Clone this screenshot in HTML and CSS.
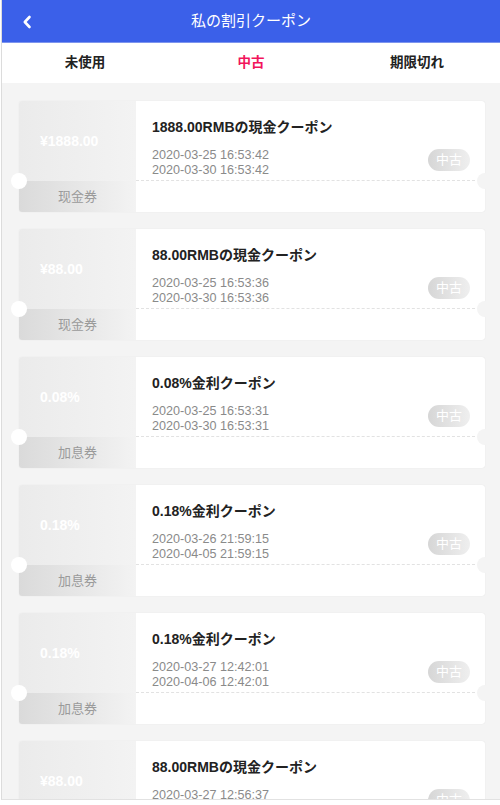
FILE: index.html
```html
<!DOCTYPE html>
<html lang="ja">
<head>
<meta charset="utf-8">
<title>私の割引クーポン</title>
<link rel="stylesheet" href="styles.css">
</head>
<body>
<div class="app">
  <header class="topbar">
    <span class="back">
      <svg width="10" height="14" viewBox="0 0 10 14"><path d="M7.5 2 L2.8 7 L7.5 12" fill="none" stroke="#fff" stroke-width="2.6" stroke-linecap="round" stroke-linejoin="round"/></svg>
    </span>
    <h1 class="title">私の割引クーポン</h1>
  </header>
  <nav class="tabs">
    <div class="tab">未使用</div>
    <div class="tab active">中古</div>
    <div class="tab">期限切れ</div>
  </nav>
  <main class="list">
    <div class="card">
      <div class="side"><div class="amount">¥1888.00</div><div class="kind">现金券</div></div>
      <div class="body"><div class="info"><div class="name">1888.00RMBの現金クーポン</div><div class="dates">2020-03-25 16:53:42<br>2020-03-30 16:53:42</div></div></div>
      <span class="badge">中古</span><span class="notch-l"></span><span class="notch-r"></span>
    </div>
    <div class="card">
      <div class="side"><div class="amount">¥88.00</div><div class="kind">现金券</div></div>
      <div class="body"><div class="info"><div class="name">88.00RMBの現金クーポン</div><div class="dates">2020-03-25 16:53:36<br>2020-03-30 16:53:36</div></div></div>
      <span class="badge">中古</span><span class="notch-l"></span><span class="notch-r"></span>
    </div>
    <div class="card">
      <div class="side"><div class="amount">0.08%</div><div class="kind">加息券</div></div>
      <div class="body"><div class="info"><div class="name">0.08%金利クーポン</div><div class="dates">2020-03-25 16:53:31<br>2020-03-30 16:53:31</div></div></div>
      <span class="badge">中古</span><span class="notch-l"></span><span class="notch-r"></span>
    </div>
    <div class="card">
      <div class="side"><div class="amount">0.18%</div><div class="kind">加息券</div></div>
      <div class="body"><div class="info"><div class="name">0.18%金利クーポン</div><div class="dates">2020-03-26 21:59:15<br>2020-04-05 21:59:15</div></div></div>
      <span class="badge">中古</span><span class="notch-l"></span><span class="notch-r"></span>
    </div>
    <div class="card">
      <div class="side"><div class="amount">0.18%</div><div class="kind">加息券</div></div>
      <div class="body"><div class="info"><div class="name">0.18%金利クーポン</div><div class="dates">2020-03-27 12:42:01<br>2020-04-06 12:42:01</div></div></div>
      <span class="badge">中古</span><span class="notch-l"></span><span class="notch-r"></span>
    </div>
    <div class="card">
      <div class="side"><div class="amount">¥88.00</div><div class="kind">现金券</div></div>
      <div class="body"><div class="info"><div class="name">88.00RMBの現金クーポン</div><div class="dates">2020-03-27 12:56:37<br>2020-04-06 12:56:37</div></div></div>
      <span class="badge">中古</span><span class="notch-l"></span><span class="notch-r"></span>
    </div>
  </main>
</div>
</body>
</html>
```

FILE: styles.css
```css
* { box-sizing: border-box; }
html, body { margin: 0; padding: 0; background: #fff; }
body {
  font-family: "Liberation Sans", Arial, "Noto Sans CJK JP", "Noto Sans CJK SC", sans-serif;
}
.app {
  margin-left: 1px;
  width: 499px;
  height: 800px;
  border-left: 1px solid #dcdcdc;
  border-bottom: 1px solid #e2e2e2;
  background: #f4f4f4;
  overflow: hidden;
}
.topbar {
  height: 43px;
  background: #3b60e9;
  border-bottom: 1px solid #7d95ee;
  display: flex;
  align-items: center;
  justify-content: center;
  position: relative;
}
.back {
  position: absolute;
  left: 20px;
  top: 15px;
  width: 10px;
  height: 14px;
  display: flex;
}
.title {
  margin: 0;
  font-size: 15px;
  font-weight: normal;
  color: #fff;
  line-height: 20px;
}
.tabs {
  height: 40px;
  background: #fff;
  display: flex;
}
.tab {
  flex: 1;
  text-align: center;
  line-height: 40px;
  font-size: 13.5px;
  font-weight: bold;
  color: #222;
}
.tab.active { color: #f2145c; }
.list {
  padding: 18px 15px 0 17px;
}
.card {
  position: relative;
  height: 111px;
  margin-bottom: 17px;
  display: flex;
  background: #fff;
  border-radius: 3px;
  box-shadow: 0 0 1px rgba(0,0,0,0.12);
}
.side {
  width: 117px;
  display: flex;
  flex-direction: column;
  border-radius: 3px 0 0 3px;
  overflow: hidden;
}
.amount {
  height: 80px;
  display: flex;
  align-items: center;
  padding-left: 21px;
  font-size: 14px;
  font-weight: bold;
  color: #fff;
  background: linear-gradient(to right, #ebebeb, #f3f3f3);
}
.kind {
  flex: 1;
  text-align: center;
  line-height: 31px;
  font-size: 13px;
  color: #9a9a9a;
  background: linear-gradient(to right, #dadada, #f3f3f3);
}
.body {
  flex: 1;
  display: flex;
  flex-direction: column;
}
.info {
  height: 80px;
  padding: 17px 0 0 16px;
  margin-right: 10px;
  border-bottom: 1px dashed #e2e2e2;
}
.name {
  font-size: 14px;
  font-weight: bold;
  line-height: 18px;
  color: #222;
}
.dates {
  margin-top: 12px;
  font-size: 12.6px;
  line-height: 15px;
  color: #8a8a8a;
}
.badge {
  position: absolute;
  right: 15px;
  top: 48px;
  width: 42px;
  height: 22px;
  border-radius: 11px;
  background: linear-gradient(to right, #d6d6d6, #efefef);
  color: #fff;
  font-size: 13px;
  line-height: 22px;
  text-align: center;
}
.notch-l, .notch-r {
  position: absolute;
  top: 72px;
  width: 16px;
  height: 16px;
  border-radius: 50%;
}
.notch-l { left: -8px; background: #fff; }
.notch-r { right: -8px; background: #f4f4f4; }
```
